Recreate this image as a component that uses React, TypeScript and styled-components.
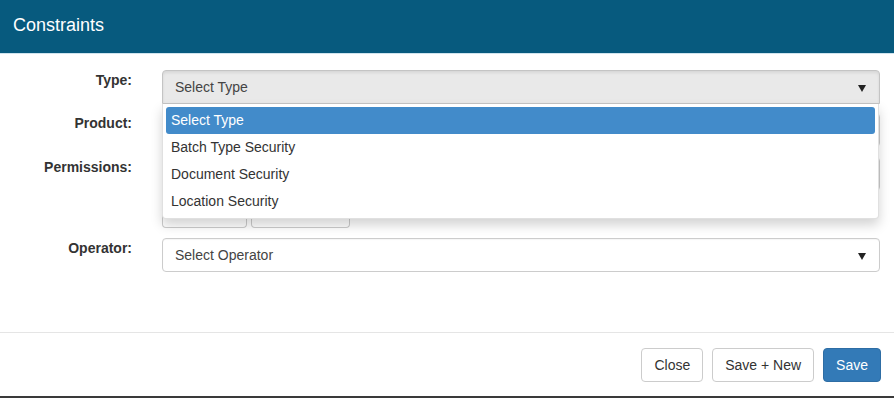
import React from 'react';
import styled, { createGlobalStyle } from 'styled-components';

const GlobalStyle = createGlobalStyle`
  html, body {
    margin: 0;
    padding: 0;
    background: #fff;
  }
  body {
    font-family: "Liberation Sans", Arial, Helvetica, sans-serif;
    font-size: 14px;
    color: #333;
  }
  * {
    box-sizing: border-box;
  }
`;

const Modal = styled.div`
  width: 894px;
  height: 398px;
  display: flex;
  flex-direction: column;
  background: #fff;
  border-bottom: 2px solid #3a3a3a;
`;

const Header = styled.div`
  height: 54px;
  flex: 0 0 auto;
  background: #075a7e;
  border-bottom: 1px solid #cfe4ee;
  padding: 15px 13px 0;
`;

const Title = styled.h4`
  margin: 0;
  font-size: 18px;
  font-weight: normal;
  line-height: 20px;
  color: #fff;
`;

const Body = styled.div`
  flex: 1 1 auto;
  padding: 16px 14px 0 0;
  display: flex;
  flex-direction: column;
`;

const Row = styled.div<{ $mb: number }>`
  display: grid;
  grid-template-columns: 147px 1fr;
  column-gap: 15px;
  margin-bottom: ${p => p.$mb}px;
`;

const Label = styled.label`
  text-align: right;
  font-weight: bold;
  line-height: 20px;
  padding-right: 15px;
`;

const Control = styled.div`
  position: relative;
`;

const Select = styled.div<{ $open?: boolean }>`
  height: 34px;
  display: flex;
  align-items: center;
  justify-content: space-between;
  padding: 0 13px 0 12px;
  border: 1px solid ${p => (p.$open ? '#c4c4c4' : '#ccc')};
  border-radius: ${p => (p.$open ? '4px 4px 0 0' : '4px')};
  background: ${p => (p.$open ? '#e9e9e9' : '#fff')};
  box-shadow: ${p => (p.$open ? 'inset 0 2px 3px rgba(0,0,0,0.08)' : 'inset 0 1px 1px rgba(0,0,0,0.04)')};
  color: #444;
`;

const Caret = styled.span`
  width: 0;
  height: 0;
  border-left: 4px solid transparent;
  border-right: 4px solid transparent;
  border-top: 7px solid #222;
  margin-top: 2px;
`;

const Field = styled.div`
  height: 34px;
  border: 1px solid #ccc;
  border-radius: 4px;
  background: #fff;
`;

const ButtonRow = styled.div`
  display: flex;
  gap: 4px;
  margin-top: 5px;
`;

const SmallButton = styled.div<{ $w: number }>`
  width: ${p => p.$w}px;
  height: 32px;
  border: 1px solid #ccc;
  border-top: none;
  border-radius: 0 0 4px 4px;
  background: #fff;
`;

const Menu = styled.ul`
  position: absolute;
  top: 34px;
  left: 0;
  right: 1px;
  margin: 0;
  padding: 3px 3px;
  list-style: none;
  background: #fff;
  border: 1px solid rgba(0,0,0,0.12);
  border-top: none;
  border-radius: 0 0 4px 4px;
  box-shadow: 0 6px 12px rgba(0,0,0,0.175);
  z-index: 10;
`;

const MenuItem = styled.li<{ $active?: boolean }>`
  height: 27px;
  line-height: 27px;
  padding: 0 5px;
  border-radius: 3px;
  color: ${p => (p.$active ? '#fff' : '#333')};
  background: ${p => (p.$active ? '#428bca' : 'transparent')};
`;

const Footer = styled.div`
  flex: 0 0 auto;
  height: 64px;
  border-top: 1px solid #e5e5e5;
  padding: 15px 13px 0 0;
  display: flex;
  justify-content: flex-end;
  gap: 9px;
`;

const Button = styled.button<{ $primary?: boolean }>`
  height: 34px;
  padding: 0 12px;
  font-family: inherit;
  font-size: 14px;
  border-radius: 4px;
  border: 1px solid ${p => (p.$primary ? '#2e6da4' : '#ccc')};
  background: ${p => (p.$primary ? '#337ab7' : '#fff')};
  color: ${p => (p.$primary ? '#fff' : '#333')};
`;

const typeOptions = ['Select Type', 'Batch Type Security', 'Document Security', 'Location Security'];

export default function App() {
  return (
    <>
      <GlobalStyle />
      <Modal>
        <Header>
          <Title>Constraints</Title>
        </Header>
        <Body>
          <Row $mb={9}>
            <Label>Type:</Label>
            <Control>
              <Select $open>
                <span>Select Type</span>
                <Caret />
              </Select>
              <Menu>
                {typeOptions.map((o, i) => (
                  <MenuItem key={o} $active={i === 0}>{o}</MenuItem>
                ))}
              </Menu>
            </Control>
          </Row>
          <Row $mb={10}>
            <Label>Product:</Label>
            <Control>
              <Select />
            </Control>
          </Row>
          <Row $mb={10}>
            <Label>Permissions:</Label>
            <Control>
              <Field />
              <ButtonRow>
                <SmallButton $w={85} />
                <SmallButton $w={99} />
              </ButtonRow>
            </Control>
          </Row>
          <Row $mb={0}>
            <Label>Operator:</Label>
            <Control>
              <Select>
                <span>Select Operator</span>
                <Caret />
              </Select>
            </Control>
          </Row>
        </Body>
        <Footer>
          <Button>Close</Button>
          <Button>Save + New</Button>
          <Button $primary>Save</Button>
        </Footer>
      </Modal>
    </>
  );
}
